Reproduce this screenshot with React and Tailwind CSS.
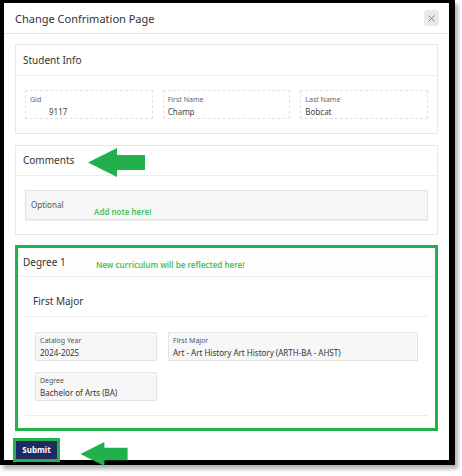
import React from 'react';

const font = { fontFamily: '"Noto Sans", "Open Sans", sans-serif' };

// Green callout arrow pointing left
const Arrow = ({ className }) => (
  <svg className={className} viewBox="0 0 57 29" width="57" height="29">
    <polygon points="0,14.5 29,0 29,7 57,7 57,22 29,22 29,29" fill="#21b04b" />
  </svg>
);

const InfoField = ({ label, value, indent }) => (
  <div className="border border-dashed border-[#e2e2e2] h-[29px] px-[4px] pt-[4px]">
    <div className="text-[7px] leading-[10px] text-[#666]">{label}</div>
    <div className={`text-[8px] leading-[14px] text-[#444] ${indent ? 'pl-[19px]' : ''}`}>{value}</div>
  </div>
);

const ReadField = ({ label, value }) => (
  <div className="bg-[#f7f7f7] border border-[#e4e4e4] h-[29px] px-[4px] pt-[3px]">
    <div className="text-[7px] leading-[10px] text-[#555]">{label}</div>
    <div className="text-[8px] leading-[13px] text-[#333]">{value}</div>
  </div>
);

const App = () => {
  return (
    <div className="w-[462px] h-[476px] bg-white" style={font}>
      <div className="w-[455px] h-[465px] border-t-[3px] border-l-[4px] border-r-[6px] border-b-[5px] border-black shadow-[3px_4px_4px_rgba(0,0,0,0.3)] flex flex-col">
        {/* modal header */}
        <div className="h-[31px] flex items-center justify-between pl-[11px] pr-[10px] border-b border-[#e6e6e6] shrink-0">
          <span className="text-[11px] text-[#333] leading-none">Change Confrimation Page</span>
          <button className="w-[15px] h-[16px] rounded-[3px] bg-[#e9e9e9] flex items-center justify-center">
            <svg width="7" height="7" viewBox="0 0 7 7">
              <path d="M0.5 0.5L6.5 6.5M6.5 0.5L0.5 6.5" stroke="#777" strokeWidth="0.9" />
            </svg>
          </button>
        </div>

        <div className="px-[11px] pt-[10px] flex flex-col">
          {/* student info */}
          <div className="border border-[#e8e8e8]">
            <div className="h-[31px] flex items-center px-[7px] border-b border-[#ececec]">
              <span className="text-[10px] text-[#333]">Student Info</span>
            </div>
            <div className="grid grid-cols-3 gap-[10px] px-[9px] py-[14px]">
              <InfoField label="Gid" value="9117" indent />
              <InfoField label="First Name" value="Champ" />
              <InfoField label="Last Name" value="Bobcat" />
            </div>
          </div>

          {/* comments */}
          <div className="relative border border-[#e8e8e8] mt-[11px]">
            <div className="h-[30px] flex items-center px-[7px] border-b border-[#ececec]">
              <span className="text-[10px] text-[#333]">Comments</span>
            </div>
            <Arrow className="absolute left-[72px] top-[2px]" />
            <div className="px-[9px] pt-[14px] pb-[14px]">
              <div className="relative h-[30px] bg-[#f6f6f6] border border-[#e2e2e2] shadow-[0_1px_1px_rgba(0,0,0,0.06)] px-[5px] pt-[9px]">
                <div className="text-[8px] leading-[10px] text-[#555]">Optional</div>
                <span className="absolute left-[68px] top-[16px] text-[8px] leading-[10px] text-[#4cc25c] font-semibold">Add note here!</span>
              </div>
            </div>
          </div>

          {/* degree */}
          <div className="mt-[10px] border-[3px] border-[#22b14c]">
            <div className="h-[29px] flex items-center px-[5px] border-b border-[#efefef] bg-[#fdfdfd]">
              <span className="text-[10px] text-[#333] w-[73px]">Degree 1</span>
              <span className="text-[8px] text-[#4cc25c] font-semibold mt-[5px]">New curriculum will be reflected here!</span>
            </div>
            <div className="px-[7px] pt-[10px]">
              <div className="h-[30px] flex items-center px-[8px] border-b border-[#ececec]">
                <span className="text-[10px] text-[#333]">First Major</span>
              </div>
              <div className="px-[10px] pt-[15px] pb-[14px] border-b border-[#ececec]">
                <div className="grid grid-cols-[122px_1fr] gap-x-[11px] gap-y-[11px]">
                  <ReadField label="Catalog Year" value="2024-2025" />
                  <ReadField label="First Major" value="Art - Art History Art History (ARTH-BA - AHST)" />
                  <ReadField label="Degree" value="Bachelor of Arts (BA)" />
                </div>
              </div>
              <div className="h-[12px]" />
            </div>
          </div>

          {/* submit */}
          <div className="flex items-center mt-[3px] -ml-[2px]">
            <div className="border-[3px] border-[#22b14c] p-0">
              <button className="w-[41px] h-[18px] bg-[#202a62] text-white text-[8px] font-bold flex items-center justify-center">
                Submit
              </button>
            </div>
            <Arrow className="ml-[19px] mt-[8px] w-[50px] h-[24px]" />
          </div>
        </div>
      </div>
    </div>
  );
};

export default App;
